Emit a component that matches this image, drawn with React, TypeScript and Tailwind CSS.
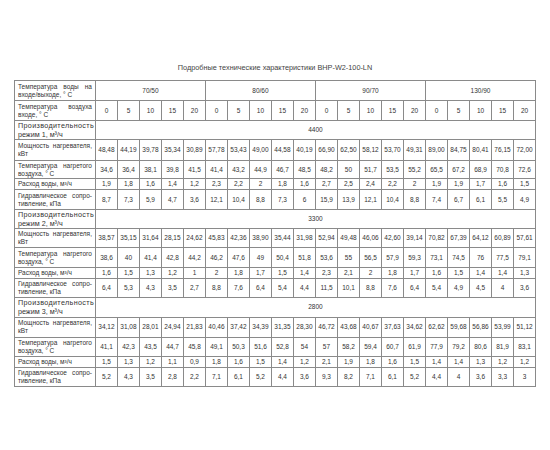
const groups = ["70/50", "80/60", "90/70", "130/90"];
const temps = ["0", "5", "10", "15", "20"];

type Section = {
  flow: string;
  mode: string;
  rows: { power: string[]; air: string[]; water: string[]; drop: string[] };
  h: number[];
};

const sections: Section[] = [
  {
    flow: "4400",
    mode: "1",
    h: [19, 21, 18, 11, 20],
    rows: {
      power: "48,48 44,19 39,78 35,34 30,89 57,78 53,43 49,00 44,58 40,19 66,90 62,50 58,12 53,70 49,31 89,00 84,75 80,41 76,15 72,00".split(" "),
      air: "34,6 36,4 38,1 39,8 41,5 41,4 43,2 44,9 46,7 48,5 48,2 50 51,7 53,5 55,2 65,5 67,2 68,9 70,8 72,6".split(" "),
      water: "1,9 1,8 1,6 1,4 1,2 2,3 2,2 2 1,8 1,6 2,7 2,5 2,4 2,2 2 1,9 1,9 1,7 1,6 1,5".split(" "),
      drop: "8,7 7,3 5,9 4,7 3,6 12,1 10,4 8,8 7,3 6 15,9 13,9 12,1 10,4 8,8 7,4 6,7 6,1 5,5 4,9".split(" "),
    },
  },
  {
    flow: "3300",
    mode: "2",
    h: [18, 19, 20, 10, 19],
    rows: {
      power: "38,57 35,15 31,64 28,15 24,62 45,83 42,36 38,90 35,44 31,98 52,94 49,48 46,06 42,60 39,14 70,82 67,39 64,12 60,89 57,61".split(" "),
      air: "38,6 40 41,4 42,8 44,2 46,2 47,6 49 50,4 51,8 53,6 55 56,5 57,9 59,3 73,1 74,5 76 77,5 79,1".split(" "),
      water: "1,6 1,5 1,3 1,2 1 2 1,8 1,7 1,5 1,4 2,3 2,1 2 1,8 1,7 1,6 1,5 1,4 1,4 1,3".split(" "),
      drop: "6,4 5,3 4,3 3,5 2,7 8,8 7,6 6,4 5,4 4,4 11,5 10,1 8,8 7,6 6,4 5,4 4,9 4,5 4 3,6".split(" "),
    },
  },
  {
    flow: "2800",
    mode: "3",
    h: [20, 20, 19, 11, 19],
    rows: {
      power: "34,12 31,08 28,01 24,94 21,83 40,46 37,42 34,39 31,35 28,30 46,72 43,68 40,67 37,63 34,62 62,62 59,68 56,86 53,99 51,12".split(" "),
      air: "41,1 42,3 43,5 44,7 45,8 49,1 50,3 51,6 52,8 54 57 58,2 59,4 60,7 61,9 77,9 79,2 80,6 81,9 83,1".split(" "),
      water: "1,5 1,3 1,2 1,1 0,9 1,8 1,6 1,5 1,4 1,2 2,1 1,9 1,8 1,6 1,5 1,4 1,4 1,3 1,2 1,2".split(" "),
      drop: "5,2 4,3 3,5 2,8 2,2 7,1 6,1 5,2 4,4 3,6 9,3 8,2 7,1 6,1 5,2 4,4 4 3,6 3,3 3".split(" "),
    },
  },
];

// two-line labels: first line spread edge to edge, second left aligned
function Label({ first, second }: { first: string; second?: string }) {
  return (
    <td className="border border-[#8a8a8a] px-[3px] align-middle text-[6.5px] leading-[8px]">
      {second ? (
        <>
          <div className="flex justify-between">
            {first.split(" ").map((w, i) => (
              <span key={i}>{w}</span>
            ))}
          </div>
          <div>{second}</div>
        </>
      ) : (
        <div>{first}</div>
      )}
    </td>
  );
}

function ValueRow({ label, values, h }: { label: React.ReactNode; values: string[]; h: number }) {
  return (
    <tr style={{ height: h }}>
      {label}
      {values.map((v, i) => (
        <td key={i} className="border border-[#8a8a8a] text-center align-middle text-[6.5px]">
          {v}
        </td>
      ))}
    </tr>
  );
}

export default function App() {
  return (
    <div className="h-[450px] w-[550px] bg-white pt-[63px] font-['Liberation_Sans',sans-serif] text-[#333]">
      <p className="mb-[7px] text-center text-[7.3px] leading-[10px] text-[#444]">
        Подробные технические характеристики BHP-W2-100-LN
      </p>
      <table className="mx-auto w-[521px] table-fixed border-collapse">
        <colgroup>
          <col className="w-[81px]" />
          {Array.from({ length: 20 }).map((_, i) => (
            <col key={i} className="w-[22px]" />
          ))}
        </colgroup>
        <tbody>
          <tr className="h-[20px]">
            <Label first="Температура воды на" second="входе/выходе, ° C" />
            {groups.map((g) => (
              <td key={g} colSpan={5} className="border border-[#8a8a8a] text-center text-[6.5px]">
                {g}
              </td>
            ))}
          </tr>
          <tr className="h-[20px]">
            <Label first="Температура воздуха" second="входе, ° C" />
            {groups.map((g) =>
              temps.map((t) => (
                <td key={g + t} className="border border-[#8a8a8a] text-center text-[6.5px]">
                  {t}
                </td>
              ))
            )}
          </tr>
          {sections.map((s) => (
            <SectionRows key={s.flow} s={s} />
          ))}
        </tbody>
      </table>
    </div>
  );
}

function SectionRows({ s }: { s: Section }) {
  return (
    <>
      <tr style={{ height: s.h[0] }}>
        <td className="border border-[#8a8a8a] px-[3px] text-[7.2px] leading-[9px]">
          <div className="tracking-[0.35px]">Производительность</div>
          <div>режим {s.mode}, м³/ч</div>
        </td>
        <td colSpan={20} className="border border-[#8a8a8a] text-center text-[6.5px]">
          {s.flow}
        </td>
      </tr>
      <ValueRow h={s.h[1]} label={<Label first="Мощность нагревателя," second="кВт" />} values={s.rows.power} />
      <ValueRow h={s.h[2]} label={<Label first="Температура нагретого" second="воздуха, ° C" />} values={s.rows.air} />
      <ValueRow h={s.h[3]} label={<Label first="Расход воды, м³/ч" />} values={s.rows.water} />
      <ValueRow h={s.h[4]} label={<Label first="Гидравлическое сопро-" second="тивление, кПа" />} values={s.rows.drop} />
    </>
  );
}
